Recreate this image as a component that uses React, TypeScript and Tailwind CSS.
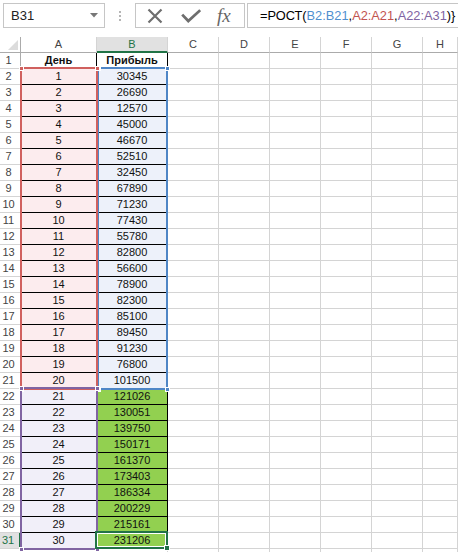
import React from "react";

const widthCls = ["w-[21px]", "w-[76px]", "w-[71px]", "w-[51px]", "w-[51px]", "w-[51px]", "w-[51px]", "w-[51px]", "w-[35px]"];
const letters = ["", "A", "B", "C", "D", "E", "F", "G", "H"];

const profits = [
  30345, 26690, 12570, 45000, 46670, 52510, 32450, 67890, 71230, 77430, 55780, 82800, 56600, 78900, 82300, 85100,
  89450, 91230, 76800, 101500, 121026, 130051, 139750, 150171, 161370, 173403, 186334, 200229, 215161, 231206,
];

function HeaderRow() {
  return (
    <div className="flex h-[16px]">
      {letters.map((l, i) => {
        if (i === 0) {
          return (
            <div key={i} className={`${widthCls[i]} h-[16px] relative border-r border-r-[#ababab] border-b border-b-[#ababab] bg-white`}>
              <svg className="absolute left-[8px] top-[3px]" width="10" height="10" viewBox="0 0 10 10">
                <polygon points="10,0 10,10 0,10" fill="#dcdcdc" />
              </svg>
            </div>
          );
        }
        const sel = l === "B";
        return (
          <div
            key={i}
            className={`${widthCls[i]} h-[16px] flex items-center justify-center border-r border-r-[#d4d4d4] ${
              sel ? "bg-[#e1e1e1] text-[#217346] border-b-2 border-b-[#217346]" : "bg-white text-[#444] border-b border-b-[#ababab]"
            } text-[11px] leading-[15px]`}
          >
            {l}
          </div>
        );
      })}
    </div>
  );
}

function DataRow({ r }: { r: number }) {
  const isActiveRow = r === 31;
  let aText: React.ReactNode = "";
  let bText: React.ReactNode = "";
  let aBg = "bg-white";
  let bBg = "bg-white";
  let bold = false;
  if (r === 1) {
    aText = "День";
    bText = "Прибыль";
    bold = true;
  } else if (r >= 2 && r <= 31) {
    aText = String(r - 1);
    bText = String(profits[r - 2]);
    if (r <= 21) {
      aBg = "bg-[#fcecee]";
      bBg = "bg-[#edf1fa]";
    } else {
      aBg = "bg-[#f1eff9]";
      bBg = "bg-[#92d050]";
    }
  }
  const inTable = r >= 1 && r <= 31;
  return (
    <div className="flex h-[16px]">
      <div
        className={`${widthCls[0]} h-[16px] flex items-center justify-center pr-[3px] text-[11px] leading-[15px] border-b border-b-[#d4d4d4] ${
          isActiveRow ? "bg-[#e1e1e1] text-[#217346] border-r-2 border-r-[#217346]" : "bg-white text-[#444] border-r border-r-[#ababab]"
        }`}
      >
        {r <= 31 ? r : ""}
      </div>
      <div
        className={`${widthCls[1]} h-[16px] flex items-center justify-center text-[11px] leading-[15px] text-[#111] ${aBg} ${
          bold ? "font-bold" : ""
        } ${inTable ? "border-b border-b-black border-r border-r-black" : "border-b border-b-[#d4d4d4] border-r border-r-[#d4d4d4]"}`}
      >
        {aText}
      </div>
      <div
        className={`${widthCls[2]} h-[16px] flex items-center justify-center text-[11px] leading-[15px] text-[#111] ${bBg} ${
          bold ? "font-bold" : ""
        } ${inTable ? "border-b border-b-black border-r border-r-black" : "border-b border-b-[#d4d4d4] border-r border-r-[#d4d4d4]"}`}
      >
        {bText}
      </div>
      {[3, 4, 5, 6, 7, 8].map((i) => (
        <div key={i} className={`${widthCls[i]} h-[16px] bg-white border-b border-b-[#d4d4d4] border-r border-r-[#d4d4d4]`} />
      ))}
    </div>
  );
}

function Handle({ x, y, color }: { x: number; y: number; color: string }) {
  return (
    <div
      className="absolute w-[5px] h-[5px] border border-white"
      style={{ left: x - 2, top: y - 2, backgroundColor: color }}
    />
  );
}

function Range({ left, top, width, height, color }: { left: number; top: number; width: number; height: number; color: string }) {
  return (
    <>
      <div className="absolute border-2" style={{ left, top, width, height, borderColor: color }} />
      <Handle x={left + 1} y={top + 1} color={color} />
      <Handle x={left + width - 1} y={top + 1} color={color} />
      <Handle x={left + 1} y={top + height - 1} color={color} />
      <Handle x={left + width - 1} y={top + height - 1} color={color} />
    </>
  );
}

export default function App() {
  const rows = Array.from({ length: 32 }, (_, i) => i + 1);
  return (
    <div className="relative w-[458px] h-[552px] overflow-hidden bg-white font-['Liberation_Sans',Arial,sans-serif]">
      {/* Formula bar */}
      <div className="h-[37px] flex items-start pt-[3px]">
        <div className="ml-[3px] w-[102px] h-[25px] border border-[#c6c6c6] flex items-center justify-between pl-[7px] pr-[6px]">
          <span className="text-[13px] text-[#222]">B31</span>
          <svg width="8" height="5" viewBox="0 0 8 5">
            <polygon points="0,0 8,0 4,4.5" fill="#777" />
          </svg>
        </div>
        <div className="w-[30px] h-[25px] flex flex-col items-center justify-center gap-[2px]">
          <div className="w-[2px] h-[2px] bg-[#b5b5b5]" />
          <div className="w-[2px] h-[2px] bg-[#b5b5b5]" />
          <div className="w-[2px] h-[2px] bg-[#b5b5b5]" />
        </div>
        <div className="w-[110px] h-[25px] border border-[#c6c6c6] flex items-center">
          <svg className="ml-[11px]" width="16" height="16" viewBox="0 0 16 16">
            <path d="M1.5 1.5 L14.5 14.5 M14.5 1.5 L1.5 14.5" stroke="#6e6e6e" strokeWidth="2.2" fill="none" />
          </svg>
          <svg className="ml-[18px] mt-[1px]" width="20" height="14" viewBox="0 0 20 14">
            <path d="M1.2 5.6 L7.3 12 L19.2 1.2" stroke="#6e6e6e" strokeWidth="2.8" fill="none" />
          </svg>
          <span className="ml-[16px] font-['Liberation_Serif',serif] italic text-[19px] leading-[20px] text-[#666] mt-[1px]">
            fx
          </span>
        </div>
        <div className="ml-[2px] flex-1 h-[25px] border border-r-0 border-[#c6c6c6] flex items-center pl-[12px] whitespace-nowrap overflow-hidden">
          <span className="text-[12.8px] text-black">
            =РОСТ(<span className="text-[#4f8fcf]">B2:B21</span>,<span className="text-[#c2534f]">A2:A21</span>,
            <span className="text-[#8064a2]">A22:A31</span>)&#125;
          </span>
        </div>
      </div>

      {/* Grid */}
      <HeaderRow />
      {rows.map((r) => (
        <DataRow key={r} r={r} />
      ))}

      {/* Range highlights */}
      <Range left={97} top={67} width={71} height={323} color="#4f86c6" />
      <Range left={20} top={67} width={78} height={323} color="#d0605e" />
      <Range left={20} top={387} width={78} height={163} color="#8064a2" />

      {/* Active cell */}
      <div className="absolute left-[95px] top-[531px] w-[73px] h-[18px] border-2 border-[#217346] shadow-[inset_0_0_0_1px_#ffffff]" />
      <div className="absolute left-[164px] top-[545px] w-[6px] h-[6px] bg-[#217346] border border-white" />
    </div>
  );
}
